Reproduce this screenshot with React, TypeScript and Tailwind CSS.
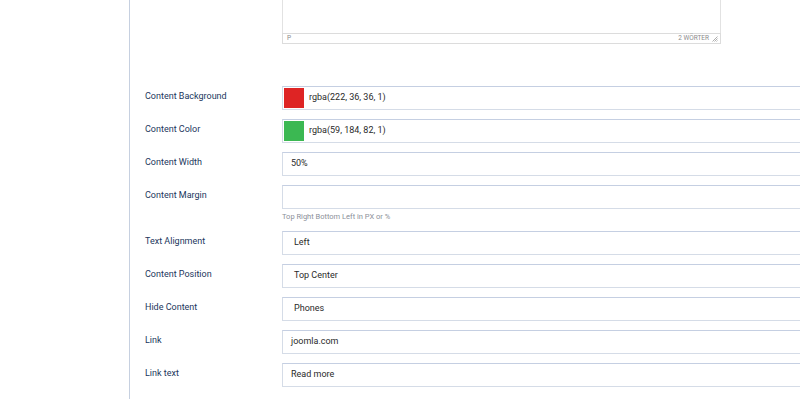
import React from 'react';

type Row = {
  label: string;
  value: string;
  kind: 'color' | 'text' | 'select';
  swatch?: string;
  help?: string;
};

const rows: Row[] = [
  { label: 'Content Background', value: 'rgba(222, 36, 36, 1)', kind: 'color', swatch: 'bg-[rgb(222,36,36)]' },
  { label: 'Content Color', value: 'rgba(59, 184, 82, 1)', kind: 'color', swatch: 'bg-[rgb(59,184,82)]' },
  { label: 'Content Width', value: '50%', kind: 'text' },
  { label: 'Content Margin', value: '', kind: 'text', help: 'Top Right Bottom Left in PX or %' },
  { label: 'Text Alignment', value: 'Left', kind: 'select' },
  { label: 'Content Position', value: 'Top Center', kind: 'select' },
  { label: 'Hide Content', value: 'Phones', kind: 'select' },
  { label: 'Link', value: 'joomla.com', kind: 'text' },
  { label: 'Link text', value: 'Read more', kind: 'text' },
];

function Field({ row }: { row: Row }) {
  return (
    <div className="flex">
      <div className="w-[137px] shrink-0 pt-[4px] text-[9px] leading-[12px] text-[#22365c]">{row.label}</div>
      <div className="flex-1 min-w-0">
        <div className="flex h-[24px] w-[640px] items-center border border-[#d5dce7] border-t-[#c5cfe2] bg-white text-[9px] text-[#2a2a2a]">
          {row.kind === 'color' && (
            <>
              <div className={`ml-[1px] h-[20px] w-[20px] shrink-0 ${row.swatch}`} />
              <span className="ml-[5px]">{row.value}</span>
            </>
          )}
          {row.kind === 'text' && <span className="pl-[8px]">{row.value}</span>}
          {row.kind === 'select' && <span className="pl-[11px]">{row.value}</span>}
        </div>
        {row.help ? (
          <div className="mt-[2px] mb-[9px] text-[7.5px] leading-[11px] text-[#8b9099]">{row.help}</div>
        ) : (
          <div className="h-[9px]" />
        )}
      </div>
    </div>
  );
}

export default function App() {
  return (
    <div className="flex h-[399px] w-[800px] overflow-hidden bg-white font-['Roboto',sans-serif]">
      {/* Sidebar edge */}
      <div className="w-[130px] shrink-0 border-r border-[#c6d0e0]" />

      <div className="min-w-0 flex-1 overflow-hidden pl-[15px]">
        {/* Editor tail */}
        <div className="ml-[137px] w-[439px]">
          <div className="h-[33px] border-x border-[#e2e2e2]" />
          <div className="flex h-[11px] items-center justify-between border border-[#dcdcdc] pl-[4px] pr-[2px] text-[6.5px] leading-none text-[#8c8c8c]">
            <span>P</span>
            <span className="flex items-center gap-[3px] uppercase">
              2 Wörter
              <svg width="6" height="6" viewBox="0 0 6 6" className="text-[#9a9a9a]">
                <path d="M5.5 0.5 L0.5 5.5 M5.5 2.5 L2.5 5.5 M5.5 4.5 L4.5 5.5" stroke="currentColor" strokeWidth="0.8" />
              </svg>
            </span>
          </div>
        </div>

        <div className="mt-[42px]">
          {rows.map((r) => (
            <Field key={r.label} row={r} />
          ))}
        </div>
      </div>
    </div>
  );
}
